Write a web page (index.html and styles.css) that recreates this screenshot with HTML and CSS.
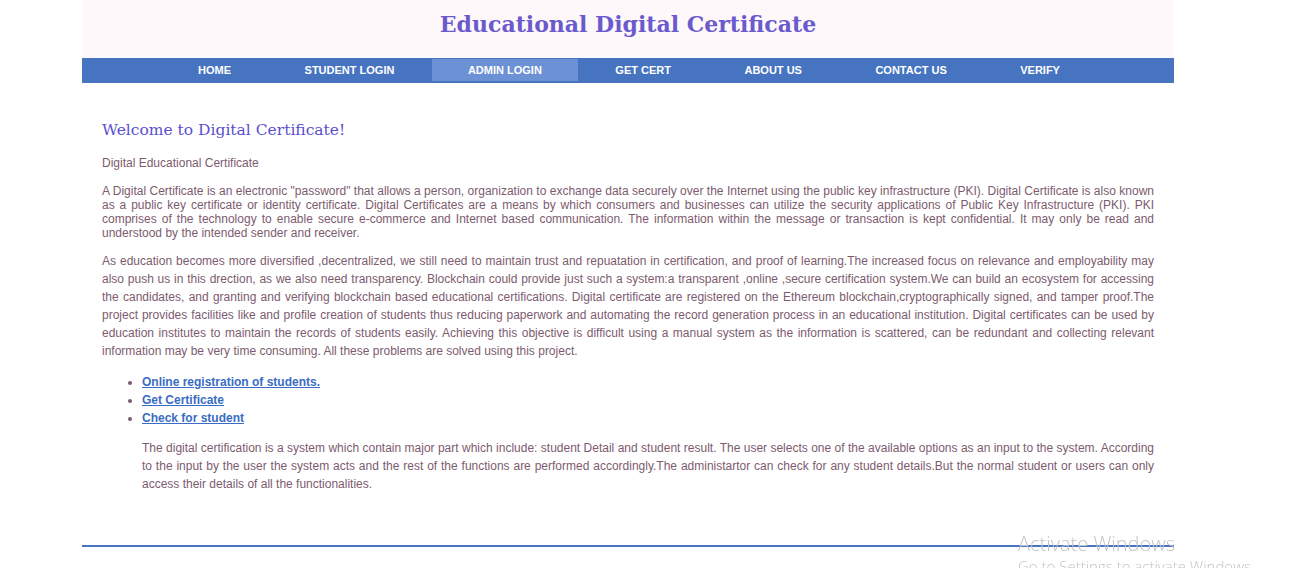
FILE: index.html
```html
<!DOCTYPE html>
<html>
<head>
<meta charset="utf-8">
<title>Educational Digital Certificate</title>
<link rel="stylesheet" href="styles.css">
</head>
<body>
<div class="page">
  <header class="header">
    <h1 class="site-title">Educational Digital Certificate</h1>
  </header>
  <nav class="nav">
    <ul class="menu">
      <li><a href="#">Home</a></li>
      <li><a href="#">Student Login</a></li>
      <li class="active"><a href="#">Admin Login</a></li>
      <li><a href="#">Get Cert</a></li>
      <li><a href="#">About Us</a></li>
      <li><a href="#">Contact Us</a></li>
      <li><a href="#">Verify</a></li>
    </ul>
  </nav>
  <main class="content">
    <h2 class="welcome">Welcome to Digital Certificate!</h2>
    <p class="lead">Digital Educational Certificate</p>
    <p class="intro">A Digital Certificate is an electronic "password" that allows a person, organization to exchange data securely over the Internet using the public key infrastructure (PKI). Digital Certificate is also known as a public key certificate or identity certificate. Digital Certificates are a means by which consumers and businesses can utilize the security applications of Public Key Infrastructure (PKI). PKI comprises of the technology to enable secure e-commerce and Internet based communication. The information within the message or transaction is kept confidential. It may only be read and understood by the intended sender and receiver.</p>
    <p class="body-text">As education becomes more diversified ,decentralized, we still need to maintain trust and repuatation in certification, and proof of learning.The increased focus on relevance and employability may also push us in this drection, as we also need transparency. Blockchain could provide just such a system:a transparent ,online ,secure certification system.We can build an ecosystem for accessing the candidates, and granting and verifying blockchain based educational certifications. Digital certificate are registered on the Ethereum blockchain,cryptographically signed, and tamper proof.The project provides facilities like and profile creation of students thus reducing paperwork and automating the record generation process in an educational institution. Digital certificates can be used by education institutes to maintain the records of students easily. Achieving this objective is difficult using a manual system as the information is scattered, can be redundant and collecting relevant information may be very time consuming. All these problems are solved using this project.</p>
    <ul class="links">
      <li><a href="#">Online registration of students.</a></li>
      <li><a href="#">Get Certificate</a></li>
      <li><a href="#">Check for student</a></li>
    </ul>
    <p class="summary">The digital certification is a system which contain major part which include: student Detail and student result. The user selects one of the available options as an input to the system. According to the input by the user the system acts and the rest of the functions are performed accordingly.The administartor can check for any student details.But the normal student or users can only access their details of all the functionalities.</p>
  </main>
  <footer class="footer"></footer>
</div>
<div class="activate">
  <div class="activate-title">Activate Windows</div>
  <div class="activate-sub">Go to Settings to activate Windows.</div>
</div>
</body>
</html>
```

FILE: styles.css
```css
html, body {
  margin: 0;
  padding: 0;
  background: #ffffff;
  overflow: hidden;
}

.page {
  width: 1092px;
  margin-left: 82px;
  font-family: "Liberation Sans", Arial, sans-serif;
}

.header {
  background: #fff8fb;
  height: 58px;
  display: flex;
  justify-content: center;
  align-items: flex-start;
}

.site-title {
  margin: 9px 0 0;
  font-family: "DejaVu Serif", Georgia, serif;
  font-weight: bold;
  font-size: 22px;
  line-height: 30px;
  color: #6a5acd;
}

.nav {
  background: #4674c1;
  height: 25px;
}

.menu {
  list-style: none;
  margin: 0;
  padding: 1px 0 0 2px;
  display: flex;
  justify-content: center;
  gap: 1.5px;
}

.menu li {
  height: 22px;
  display: flex;
  align-items: center;
  padding: 0 36px;
}

.menu li.active {
  background: #6d91d5;
}

.menu a {
  color: #ffffff;
  text-decoration: none;
  text-transform: uppercase;
  font-weight: bold;
  font-size: 11px;
}

.content {
  padding: 25px 20px 0;
  height: 462px;
  box-sizing: border-box;
  color: #7d5b6f;
  font-size: 12px;
}

.welcome {
  margin: 11px 0 15px;
  font-family: "DejaVu Serif", Georgia, serif;
  font-weight: normal;
  font-size: 15.5px;
  line-height: 22px;
  color: #5a4fcf;
}

.lead {
  margin: 0 0 14px;
  line-height: 14px;
}

.intro {
  margin: 0 0 12px;
  line-height: 14px;
  text-align: justify;
}

.body-text {
  margin: 0 0 13px;
  line-height: 18px;
  text-align: justify;
}

.links {
  margin: 0 0 12px;
  padding-left: 40px;
  line-height: 18px;
}

.links a {
  color: #3a6cc4;
  font-weight: bold;
}

.summary {
  margin: 0;
  padding-left: 40px;
  line-height: 18px;
  text-align: justify;
}

.footer {
  border-top: 2px solid #4674c1;
}

.activate {
  position: fixed;
  left: 1018px;
  top: 531px;
  color: #c4c4c4;
  font-family: "Open Sans", "Noto Sans", sans-serif;
  font-weight: 300;
  white-space: nowrap;
}

.activate-title {
  font-size: 20px;
  line-height: 26px;
}

.activate-sub {
  font-size: 15px;
  line-height: 18px;
}
```
